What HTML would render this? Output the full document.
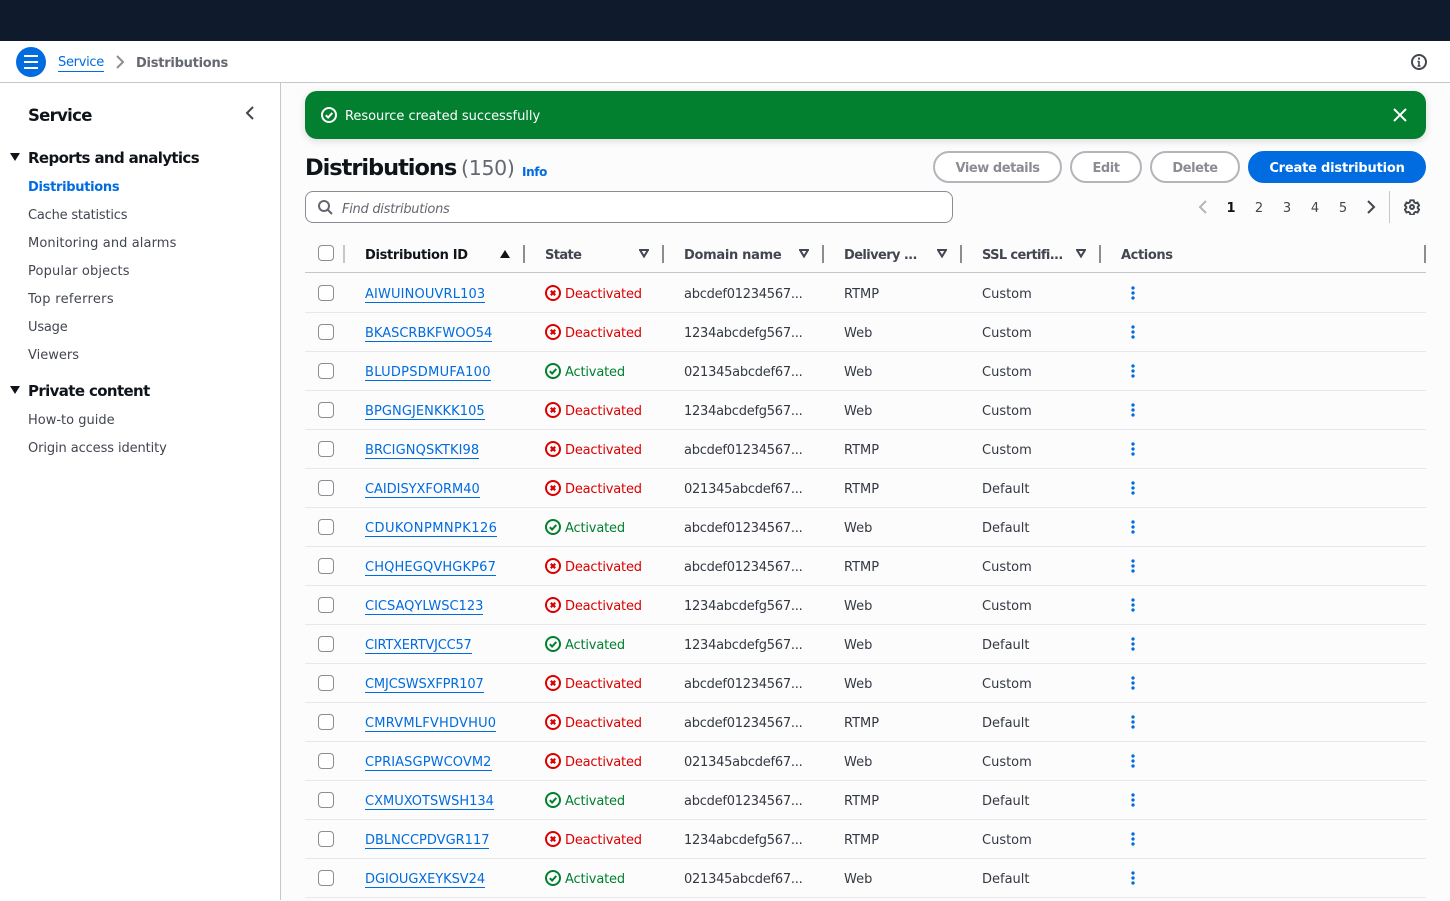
<!DOCTYPE html>
<html lang="en"><head><meta charset="utf-8"><title>Distributions</title>
<style>
*{box-sizing:border-box;margin:0;padding:0}
html,body{width:1450px;height:900px;overflow:hidden;background:#fcfcfc;font-family:"DejaVu Sans","Liberation Sans",sans-serif;font-size:13px;color:#414750}
.a{position:absolute;white-space:nowrap}
b,.b{font-weight:700}
#top{left:0;top:0;width:1450px;height:41px;background:#0f1b2d}
#bar{left:0;top:41px;width:1450px;height:42px;background:#fff;border-bottom:1px solid #c6c6cd}
#side{left:0;top:83px;width:281px;height:817px;background:#fff;border-right:1px solid #c6c6cd}
.nv{left:28px;line-height:20px;color:#424650}
.nh{left:28px;line-height:22px;font-size:15px;font-weight:700;color:#0f141a;letter-spacing:-.63px}
.tri{width:0;height:0;border-left:5.5px solid transparent;border-right:5.5px solid transparent;border-top:8px solid #0f141a}
.btn{top:151px;height:32px;border:2px solid #b4b4bb;border-radius:16px;color:#8c8c94;font-weight:700;line-height:32px;text-align:center;letter-spacing:-.45px;background:#fff}
.pg{top:199px;line-height:20px;width:12px;text-align:center;color:#424650}
.th{top:246px;line-height:20px;font-weight:700;color:#424650;letter-spacing:-.4px}
.sep{top:245px;width:2px;height:18px;background:#8c8c94}
.fl{top:249px}
.r{position:absolute;left:305px;width:1121px;height:39px;border-bottom:1px solid #e8e8ec}
.r>*{position:absolute;white-space:nowrap;line-height:42px}
.r i{left:13px;top:11px;width:16px;height:16px;border:1px solid #8c8c94;border-radius:4px;background:#fff}
.r a{left:60px;top:10px;line-height:22px;height:19px;color:#006ce0;border-bottom:1px solid #006ce0;text-decoration:none}
.r svg{left:240px;top:11px;width:16px;height:16px}
.r .s{left:260px;letter-spacing:-.18px}
.off{color:#db0000}.on{color:#00802f}
.r .d{left:379px;color:#333843;letter-spacing:-.25px}.r .t{left:539px;color:#333843}.r .c{left:677px;color:#333843}
.r u{left:826px;top:12px;width:4px;height:14px;background:radial-gradient(circle at 2px 2px,#006ce0 1.5px,transparent 1.9px) 0 0/4px 5px repeat-y}
</style></head><body>
<svg width="0" height="0" style="position:absolute"><symbol id="x" viewBox="0 0 16 16"><circle cx="8" cy="8" r="7" fill="none" stroke="#db0000" stroke-width="2"/><path d="M5.800 5.800l4.400 4.400M10.200 5.800l-4.400 4.400" stroke="#db0000" stroke-width="2.200" fill="none"/></symbol><symbol id="k" viewBox="0 0 16 16"><circle cx="8" cy="8" r="7" fill="none" stroke="#00802f" stroke-width="2"/><path d="M4.800 8.200l2.300 2.300 4.200-4.600" stroke="#00802f" stroke-width="2" fill="none"/></symbol></svg>

<div class="a" id="top"></div>
<div class="a" id="bar"></div>
<div class="a" style="left:16px;top:47px;width:30px;height:30px;border-radius:50%;background:#006ce0"></div>
<svg class="a" style="left:16px;top:47px" width="30" height="30"><path d="M8 9h14M8 15h14M8 21h14" stroke="#fff" stroke-width="2"/></svg>
<a class="a" style="left:58px;top:52px;line-height:22px;height:20px;color:#006ce0;border-bottom:1px solid #006ce0;letter-spacing:-.3px">Service</a>
<svg class="a" style="left:112px;top:54px" width="16" height="16"><path d="M5 2l6 6-6 6" fill="none" stroke="#8c8c94" stroke-width="2"/></svg>
<div class="a b" style="left:136px;top:54px;line-height:20px;color:#656871;letter-spacing:-.25px">Distributions</div>
<svg class="a" style="left:1411px;top:54px" width="16" height="16"><circle cx="8" cy="8" r="7" fill="none" stroke="#424650" stroke-width="2"/><path d="M8 7v5M6.500 12h3M6.500 7.500H8" stroke="#424650" stroke-width="1.600" fill="none"/><path d="M7 3.600h2v2H7z" fill="#424650"/></svg>

<div class="a" id="side"></div>
<div class="a b" style="left:28px;top:104px;line-height:24px;font-size:16.5px;color:#0f141a;letter-spacing:-.7px">Service</div>
<svg class="a" style="left:242px;top:105px" width="16" height="16"><path d="M11 2L5 8l6 6" fill="none" stroke="#424650" stroke-width="2"/></svg>
<div class="a tri" style="left:10px;top:153px"></div>
<div class="a nh" style="top:147px">Reports and analytics</div>
<div class="a nv b" style="top:177px;line-height:22px;height:20px;color:#006ce0;letter-spacing:-.3px">Distributions</div>
<div class="a nv" style="top:205px;line-height:22px;height:20px;letter-spacing:-.2px">Cache statistics</div>
<div class="a nv" style="top:233px;line-height:22px;height:20px;letter-spacing:.1px">Monitoring and alarms</div>
<div class="a nv" style="top:261px;line-height:22px;height:20px;letter-spacing:.13px">Popular objects</div>
<div class="a nv" style="top:289px;line-height:22px;height:20px;letter-spacing:.3px">Top referrers</div>
<div class="a nv" style="top:317px;line-height:22px;height:20px;letter-spacing:-.2px">Usage</div>
<div class="a nv" style="top:345px;line-height:22px;height:20px">Viewers</div>
<div class="a tri" style="left:10px;top:386px"></div>
<div class="a nh" style="top:380px">Private content</div>
<div class="a nv" style="top:410px;line-height:22px;height:20px">How-to guide</div>
<div class="a nv" style="top:438px;line-height:22px;height:20px;letter-spacing:-.1px">Origin access identity</div>

<div class="a" style="left:305px;top:91px;width:1121px;height:48px;background:#037f30;border-radius:12px;box-shadow:0 2px 8px rgba(0,0,0,.14)"></div>
<svg class="a" style="left:321px;top:107px" width="16" height="16"><circle cx="8" cy="8" r="7" fill="none" stroke="#fff" stroke-width="2"/><path d="M4.800 8.200l2.300 2.300 4.200-4.600" stroke="#fff" stroke-width="2" fill="none"/></svg>
<div class="a" style="left:345px;top:107px;line-height:20px;color:#fff;letter-spacing:-.03px">Resource created successfully</div>
<svg class="a" style="left:1392px;top:107px" width="16" height="16"><path d="M2 2l12 12M14 2L2 14" stroke="#fff" stroke-width="2"/></svg>

<div class="a b" style="left:305px;top:152px;line-height:32px;font-size:22.5px;color:#0f141a;letter-spacing:-1.05px">Distributions</div>
<div class="a" style="left:461px;top:152px;line-height:32px;font-size:20.5px;color:#656871;letter-spacing:-.3px">(150)</div>
<div class="a b" style="left:522px;top:163px;line-height:18px;font-size:12px;color:#006ce0;letter-spacing:-.35px">Info</div>

<div class="a btn" style="left:933px;width:129px">View details</div>
<div class="a btn" style="left:1070px;width:72px">Edit</div>
<div class="a btn" style="left:1150px;width:90px">Delete</div>
<div class="a btn" style="left:1248px;width:178px;background:#006ce0;border-color:#006ce0;color:#fff;letter-spacing:-.2px">Create distribution</div>

<div class="a" style="left:305px;top:191px;width:648px;height:32px;background:#fff;border:1px solid #8c8c94;border-radius:8px"></div>
<svg class="a" style="left:317px;top:199px" width="16" height="16"><circle cx="7" cy="7" r="5" fill="none" stroke="#656871" stroke-width="2"/><path d="M10.500 10.500L15 15" stroke="#656871" stroke-width="2"/></svg>
<div class="a" style="left:342px;top:200px;line-height:20px;font-style:italic;color:#656871;letter-spacing:-.28px">Find distributions</div>

<svg class="a" style="left:1195px;top:199px" width="16" height="16"><path d="M11 2L5 8l6 6" fill="none" stroke="#b4b4bb" stroke-width="2"/></svg>
<div class="a pg b" style="left:1225px;color:#0f141a">1</div>
<div class="a pg" style="left:1253px">2</div>
<div class="a pg" style="left:1281px">3</div>
<div class="a pg" style="left:1309px">4</div>
<div class="a pg" style="left:1337px">5</div>
<svg class="a" style="left:1363px;top:199px" width="16" height="16"><path d="M5 2l6 6-6 6" fill="none" stroke="#424650" stroke-width="2"/></svg>
<div class="a" style="left:1389px;top:191px;width:1px;height:32px;background:#c6c6cd"></div>
<svg class="a" style="left:1404px;top:199px" width="16" height="16"><path d="M6.300 1.300h3.400l.5 2 1.300.8 2-.6 1.700 3-1.500 1.400v1.200l1.500 1.400-1.700 3-2-.6-1.300.8-.5 2H6.300l-.5-2-1.300-.8-2 .6-1.700-3 1.500-1.400V7.900L.8 6.500l1.700-3 2 .6 1.300-.8z" fill="none" stroke="#424650" stroke-width="1.900"/><circle cx="8" cy="8" r="2" fill="none" stroke="#424650" stroke-width="1.900"/></svg>

<div class="a" style="left:318px;top:245px;width:16px;height:16px;border:1px solid #8c8c94;border-radius:4px;background:#fff"></div>
<div class="a sep" style="left:343px;background:#c6c6cd"></div>
<div class="a th" style="left:365px;color:#0f141a;letter-spacing:-.33px">Distribution ID</div>
<div class="a" style="left:500px;top:250px;width:0;height:0;border-left:5.5px solid transparent;border-right:5.5px solid transparent;border-bottom:8px solid #0f141a"></div>
<div class="a sep" style="left:523px"></div>
<div class="a th" style="left:545px;letter-spacing:-.6px">State</div>
<svg class="a fl" style="left:639px" width="10" height="9"><path d="M1 1h8L5 7.500z" fill="none" stroke="#424650" stroke-width="2"/></svg>
<div class="a sep" style="left:662px"></div>
<div class="a th" style="left:684px;letter-spacing:-.3px">Domain name</div>
<svg class="a fl" style="left:799px" width="10" height="9"><path d="M1 1h8L5 7.500z" fill="none" stroke="#424650" stroke-width="2"/></svg>
<div class="a sep" style="left:822px"></div>
<div class="a th" style="left:844px;letter-spacing:-.6px">Delivery ...</div>
<svg class="a fl" style="left:937px" width="10" height="9"><path d="M1 1h8L5 7.500z" fill="none" stroke="#424650" stroke-width="2"/></svg>
<div class="a sep" style="left:960px"></div>
<div class="a th" style="left:982px;letter-spacing:-.63px">SSL certifi...</div>
<svg class="a fl" style="left:1076px" width="10" height="9"><path d="M1 1h8L5 7.500z" fill="none" stroke="#424650" stroke-width="2"/></svg>
<div class="a sep" style="left:1099px"></div>
<div class="a th" style="left:1121px">Actions</div>
<div class="a sep" style="left:1424px"></div>
<div class="a" style="left:305px;top:272px;width:1121px;height:1px;background:#c6c6cd"></div>

<div class="r" style="top:274px"><i></i><a style="letter-spacing:.14px">AIWUINOUVRL103</a><svg><use href="#x"/></svg><span class="s off">Deactivated</span><span class="d">abcdef01234567...</span><span class="t">RTMP</span><span class="c">Custom</span><u></u></div>
<div class="r" style="top:313px"><i></i><a>BKASCRBKFWOO54</a><svg><use href="#x"/></svg><span class="s off">Deactivated</span><span class="d">1234abcdefg567...</span><span class="t">Web</span><span class="c">Custom</span><u></u></div>
<div class="r" style="top:352px"><i></i><a style="letter-spacing:.28px">BLUDPSDMUFA100</a><svg><use href="#k"/></svg><span class="s on">Activated</span><span class="d">021345abcdef67...</span><span class="t">Web</span><span class="c">Custom</span><u></u></div>
<div class="r" style="top:391px"><i></i><a style="letter-spacing:.07px">BPGNGJENKKK105</a><svg><use href="#x"/></svg><span class="s off">Deactivated</span><span class="d">1234abcdefg567...</span><span class="t">Web</span><span class="c">Custom</span><u></u></div>
<div class="r" style="top:430px"><i></i><a style="letter-spacing:.1px">BRCIGNQSKTKI98</a><svg><use href="#x"/></svg><span class="s off">Deactivated</span><span class="d">abcdef01234567...</span><span class="t">RTMP</span><span class="c">Custom</span><u></u></div>
<div class="r" style="top:469px"><i></i><a style="letter-spacing:-.04px">CAIDISYXFORM40</a><svg><use href="#x"/></svg><span class="s off">Deactivated</span><span class="d">021345abcdef67...</span><span class="t">RTMP</span><span class="c">Default</span><u></u></div>
<div class="r" style="top:508px"><i></i><a style="letter-spacing:.43px">CDUKONPMNPK126</a><svg><use href="#k"/></svg><span class="s on">Activated</span><span class="d">abcdef01234567...</span><span class="t">Web</span><span class="c">Default</span><u></u></div>
<div class="r" style="top:547px"><i></i><a style="letter-spacing:.14px">CHQHEGQVHGKP67</a><svg><use href="#x"/></svg><span class="s off">Deactivated</span><span class="d">abcdef01234567...</span><span class="t">RTMP</span><span class="c">Custom</span><u></u></div>
<div class="r" style="top:586px"><i></i><a>CICSAQYLWSC123</a><svg><use href="#x"/></svg><span class="s off">Deactivated</span><span class="d">1234abcdefg567...</span><span class="t">Web</span><span class="c">Custom</span><u></u></div>
<div class="r" style="top:625px"><i></i><a style="letter-spacing:-.21px">CIRTXERTVJCC57</a><svg><use href="#k"/></svg><span class="s on">Activated</span><span class="d">1234abcdefg567...</span><span class="t">Web</span><span class="c">Default</span><u></u></div>
<div class="r" style="top:664px"><i></i><a style="letter-spacing:-.14px">CMJCSWSXFPR107</a><svg><use href="#x"/></svg><span class="s off">Deactivated</span><span class="d">abcdef01234567...</span><span class="t">Web</span><span class="c">Custom</span><u></u></div>
<div class="r" style="top:703px"><i></i><a style="letter-spacing:.21px">CMRVMLFVHDVHU0</a><svg><use href="#x"/></svg><span class="s off">Deactivated</span><span class="d">abcdef01234567...</span><span class="t">RTMP</span><span class="c">Default</span><u></u></div>
<div class="r" style="top:742px"><i></i><a style="letter-spacing:.1px">CPRIASGPWCOVM2</a><svg><use href="#x"/></svg><span class="s off">Deactivated</span><span class="d">021345abcdef67...</span><span class="t">Web</span><span class="c">Custom</span><u></u></div>
<div class="r" style="top:781px"><i></i><a>CXMUXOTSWSH134</a><svg><use href="#k"/></svg><span class="s on">Activated</span><span class="d">abcdef01234567...</span><span class="t">RTMP</span><span class="c">Default</span><u></u></div>
<div class="r" style="top:820px"><i></i><a>DBLNCCPDVGR117</a><svg><use href="#x"/></svg><span class="s off">Deactivated</span><span class="d">1234abcdefg567...</span><span class="t">RTMP</span><span class="c">Custom</span><u></u></div>
<div class="r" style="top:859px"><i></i><a style="letter-spacing:-.07px">DGIOUGXEYKSV24</a><svg><use href="#k"/></svg><span class="s on">Activated</span><span class="d">021345abcdef67...</span><span class="t">Web</span><span class="c">Default</span><u></u></div>
</body></html>
